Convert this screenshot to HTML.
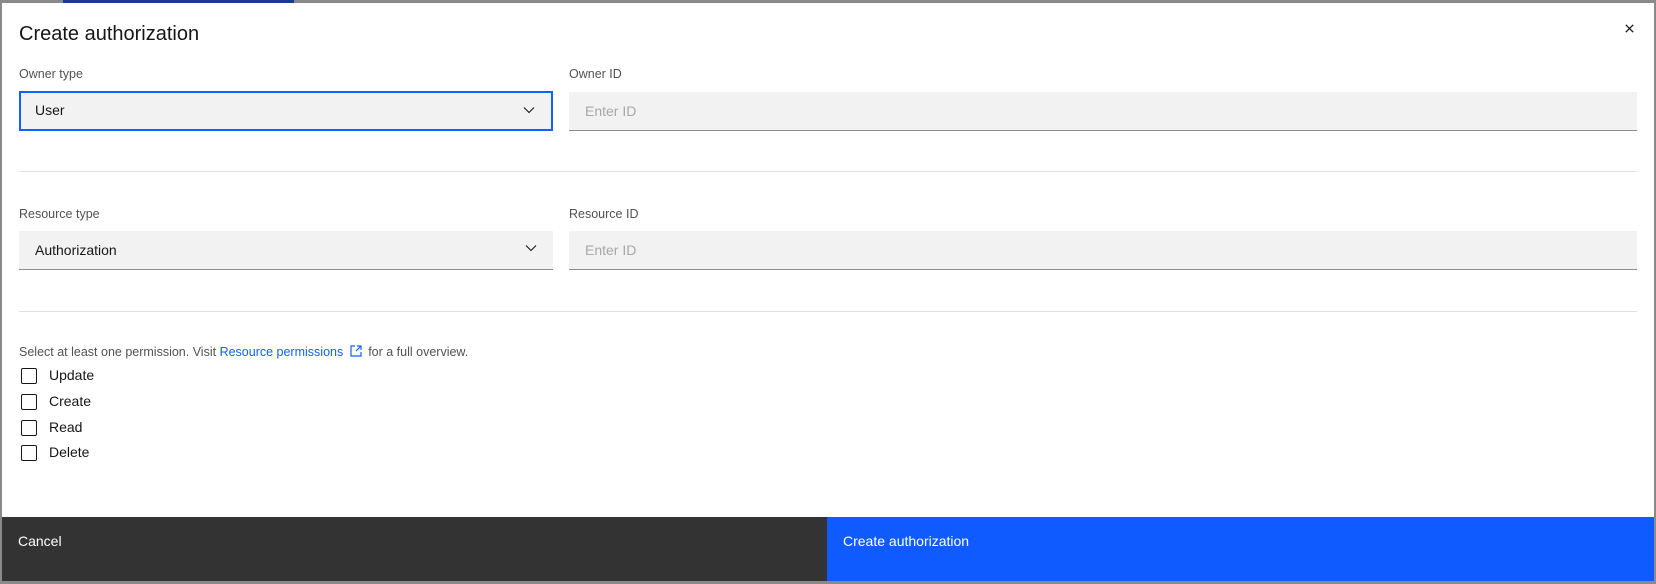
<!DOCTYPE html>
<html><head><style>
*{box-sizing:border-box;margin:0;padding:0}
body{width:1656px;height:584px;background:#8a8a8a;position:relative;overflow:hidden;font-family:"Liberation Sans",sans-serif;color:#161616}
.modal{position:absolute;left:2px;top:3px;width:1652px;height:578px;background:#fff}
.topbar{position:absolute;left:63px;top:0;width:231px;height:3px;background:#1a3a8f}
.abs{position:absolute}
.title{left:17px;top:20px;font-size:20px}
.lbl{font-size:12.5px;color:#525252}
.field{background:#f2f2f2;border-bottom:1px solid #8d8d8d;height:39px;font-size:14px;line-height:38px;padding-left:16px}
.ph{color:#a8a8a8}
.sel{border:2px solid #0f62fe;line-height:35px;padding-left:14px}
.chev{position:absolute;right:16px;top:13px}
.hr{height:1px;background:#e0e0e0;left:17px;width:1618px}
.cb{width:16px;height:16px;border:1px solid #161616;border-radius:2px;left:19px}
.cbl{left:47px;font-size:14px}
.foot{top:514px;height:64px;font-size:14px;color:#fff;padding:16px 16px}
</style></head><body>
<div class="topbar"></div>
<div class="modal">
<div class="abs title">Create authorization</div>
<svg class="abs" style="left:1621px;top:19px" width="13" height="13" viewBox="0 0 14 14"><path d="M3 3L11 11M11 3L3 11" stroke="#161616" stroke-width="1.4"/></svg>

<div class="abs lbl" style="left:17px;top:64px">Owner type</div>
<div class="abs field sel" style="left:17px;top:88px;width:534px;height:40px">User<svg class="chev" width="12" height="8" viewBox="0 0 12 8"><path d="M1 1.5L6 6.5L11 1.5" stroke="#161616" stroke-width="1.1" fill="none"/></svg></div>
<div class="abs lbl" style="left:567px;top:64px">Owner ID</div>
<div class="abs field ph" style="left:567px;top:89px;width:1068px">Enter ID</div>

<div class="abs hr" style="top:168px"></div>

<div class="abs lbl" style="left:17px;top:204px">Resource type</div>
<div class="abs field" style="left:17px;top:228px;width:534px">Authorization<svg class="chev" width="12" height="8" viewBox="0 0 12 8"><path d="M1 1.5L6 6.5L11 1.5" stroke="#161616" stroke-width="1.1" fill="none"/></svg></div>
<div class="abs lbl" style="left:567px;top:204px">Resource ID</div>
<div class="abs field ph" style="left:567px;top:228px;width:1068px">Enter ID</div>

<div class="abs hr" style="top:308px"></div>

<div class="abs lbl" style="left:17px;top:341px;color:#525252">Select at least one permission. Visit <span style="color:#0f62fe">Resource permissions</span> <svg width="14" height="14" viewBox="0 0 14 14" style="vertical-align:-2px;margin:0 2px"><path d="M6 2H2V12H12V8M8 2H12V6M12 2L7 7" stroke="#0f62fe" stroke-width="1.2" fill="none"/></svg> for a full overview.</div>

<div class="abs cb" style="top:365px"></div><div class="abs cbl" style="top:364px">Update</div>
<div class="abs cb" style="top:391px"></div><div class="abs cbl" style="top:390px">Create</div>
<div class="abs cb" style="top:417px"></div><div class="abs cbl" style="top:416px">Read</div>
<div class="abs cb" style="top:442px"></div><div class="abs cbl" style="top:441px">Delete</div>

<div class="abs foot" style="left:0;width:825px;background:#333">Cancel</div>
<div class="abs foot" style="left:825px;width:827px;background:#0f5bff">Create authorization</div>
</div>
</body></html>
